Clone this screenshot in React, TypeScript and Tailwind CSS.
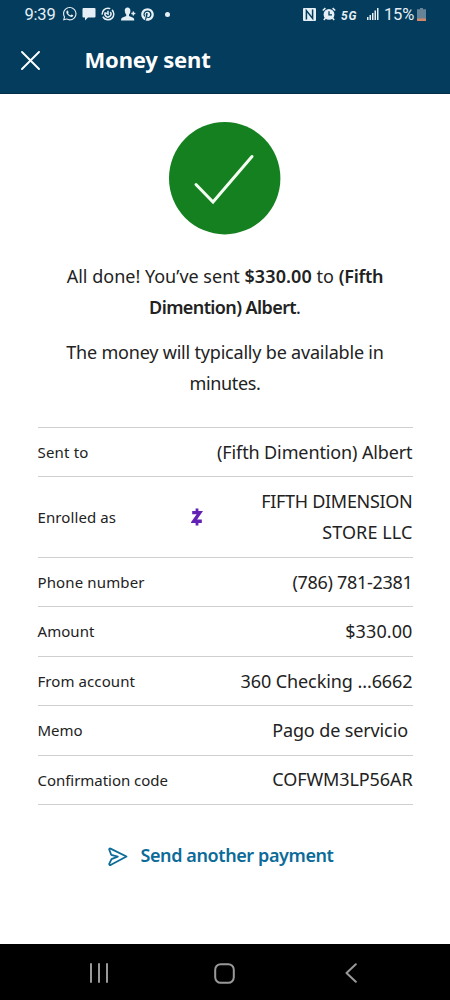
import React from "react";
import { FaWhatsapp, FaPinterest } from "react-icons/fa";

type Row = { label: string; value: string; tracking: string; labelTracking: string; tall?: boolean };

const rows: Row[] = [
  { label: "Sent to", value: "(Fifth Dimention) Albert", tracking: "tracking-[-0.12px]", labelTracking: "tracking-[0.18px]" },
  { label: "Enrolled as", value: "FIFTH DIMENSION STORE LLC", tracking: "tracking-[-0.3px]", labelTracking: "tracking-[0.1px]", tall: true },
  { label: "Phone number", value: "(786) 781-2381", tracking: "tracking-[-0.3px]", labelTracking: "tracking-[0.13px]" },
  { label: "Amount", value: "$330.00", tracking: "tracking-[0.1px]", labelTracking: "tracking-[0.06px]" },
  { label: "From account", value: "360 Checking ...6662", tracking: "tracking-[-0.08px]", labelTracking: "tracking-[0.08px]" },
  { label: "Memo", value: "Pago de servicio\u00a0", tracking: "tracking-[-0.12px]", labelTracking: "tracking-[-0.04px]" },
  { label: "Confirmation code", value: "COFWM3LP56AR", tracking: "tracking-[-0.1px]", labelTracking: "tracking-[-0.04px]" },
];

function ZelleMark() {
  return (
    <svg width="12" height="18" viewBox="0 0 12 18" fill="none" stroke="#6320b4" className="absolute left-[153px] top-[31px]">
      <path d="M1.2 4.6H8.8L2.8 13.2H10.8" strokeWidth="3.4" />
      <path d="M6 0.5V4M6 14V17.5" strokeWidth="2.8" />
    </svg>
  );
}

function StatusBar() {
  return (
    <div className="flex h-[28px] items-center pl-[24.5px] pr-[24px] font-['Roboto',sans-serif] text-[16.5px] leading-[28px] text-[#e6eff5]">
      <span className="w-[37.5px] pt-px tracking-[-0.2px]">9:39</span>
      <FaWhatsapp size={15.5} className="shrink-0" />
      <svg width="14" height="14" viewBox="0 0 14 14" className="ml-[4.5px]" fill="currentColor">
        <path d="M1.5 1H12.5Q13.5 1 13.5 2V9.5Q13.5 10.5 12.5 10.5H6L3 13.5V10.5H1.5Q.5 10.5 .5 9.5V2Q.5 1 1.5 1Z" />
      </svg>
      <svg width="14" height="14" viewBox="0 0 14 14" className="ml-[5px]" fill="none" stroke="currentColor" strokeWidth="1.5">
        <circle cx="7" cy="7" r="5.8" strokeDasharray="15 2 12 2" />
        <path d="M4.5 5.3A3 3 0 1 0 9.2 5M7 3.8V7L5.2 5.8" />
      </svg>
      <svg width="15" height="14" viewBox="0 0 15 14" className="ml-[5.5px]" fill="currentColor">
        <path d="M6.5.5C4.6.5 3.6 2 3.8 4 4 5.9 4.6 6.9 5.2 7.5V9L1 10.8Q0 11.3 0 13.5H13.3Q13.3 11.3 12.2 10.8L8 9V7.5C8.7 6.8 9.3 5.8 9.4 4 9.5 1.8 8.4.5 6.5.5Z" />
        <path d="M12.3 4.5V8.5M10.3 6.5H14.3" stroke="currentColor" strokeWidth="1.4" />
      </svg>
      <FaPinterest size={13} className="ml-[5px]" />
      <span className="ml-[11px] size-[5px] rounded-full bg-current" />
      <span className="flex-1" />
      <svg width="13" height="13" viewBox="0 0 13 13">
        <rect width="13" height="13" rx="1" fill="currentColor" />
        <path d="M3.4 11.4V2.6L9.6 10.4V1.6" fill="none" stroke="#033c5c" strokeWidth="1.5" />
      </svg>
      <svg width="14" height="14" viewBox="0 0 14 14" className="ml-[6px]">
        <circle cx="7" cy="7.4" r="5.4" fill="currentColor" />
        <path d="M.8 3.5L3.4 1.1M13.2 3.5L10.6 1.1M3.5 11L1.8 13M10.5 11L12.2 13" stroke="currentColor" strokeWidth="1.6" />
        <path d="M7 4.2V7.8H10" fill="none" stroke="#033c5c" strokeWidth="1.3" />
      </svg>
      <span className="ml-[5px] w-[18px] pt-[3px] text-[12px] font-bold italic tracking-[0.8px]">5G</span>
      <svg width="12" height="12" viewBox="0 0 12 12" className="ml-[8px]" fill="currentColor">
        <rect x="0" y="9" width="1.5" height="3" />
        <rect x="2.5" y="7" width="1.5" height="5" />
        <rect x="5" y="5" width="1.5" height="7" />
        <rect x="7.5" y="2.5" width="1.5" height="9.5" />
        <rect x="10" y="0" width="1.5" height="12" />
      </svg>
      <span className="ml-[5px] w-[33px] whitespace-nowrap pt-px tracking-[-0.2px]">15%</span>
      <svg width="9" height="13" viewBox="0 0 9 13">
        <path d="M3 0H6V1.3H9V13H0V1.3H3Z" fill="#668398" />
        <path d="M0 10.5H9V13H0Z" fill="#d48767" />
      </svg>
    </div>
  );
}

export default function App() {
  return (
    <div className="flex h-[1000px] w-[450px] flex-col overflow-hidden bg-white font-['Noto_Sans',sans-serif] text-[#222]">
      <header className="h-[94px] shrink-0 border-b border-[#02304b] bg-[#033c5c]">
        <StatusBar />
        <div className="flex h-[65px] items-center pl-[21px] text-white">
          <svg width="19" height="19" viewBox="0 0 19 19" fill="none" stroke="currentColor" strokeWidth="1.9" strokeLinecap="round">
            <path d="M1 1L18 18M18 1L1 18" />
          </svg>
          <h1 className="ml-[44.5px] pb-[4px] text-[22px] font-bold leading-[30px] tracking-[-0.18px]">Money sent</h1>
        </div>
      </header>

      <main className="flex flex-1 flex-col items-center">
        <svg width="112" height="113" viewBox="0 0 112 113" className="mt-[28px] shrink-0">
          <ellipse cx="55.7" cy="56.2" rx="55.7" ry="56.2" fill="#158020" />
          <path d="M27 62.5L44 80L83 34.5" fill="none" stroke="#f4fff2" strokeWidth="3" strokeLinecap="round" />
        </svg>

        <div className="mt-[26px] text-center text-[18px] leading-[31px]">
          <p className="whitespace-nowrap">
            All done! You’ve sent <span className="font-semibold tracking-[0.1px]">$330.00</span> to{" "}
            <span className="font-semibold tracking-[-0.25px]">(Fifth</span>
            <br />
            <span className="font-semibold tracking-[-0.6px]">Dimention) Albert</span>.
          </p>
          <p className="mt-[14px] whitespace-nowrap tracking-[-0.2px]">
            The money will typically be available in
            <br />
            <span className="tracking-[-0.35px]">minutes.</span>
          </p>
        </div>

        <dl className="mt-[28px] w-[375px] border-b border-[#cfcfcf]">
          {rows.map((row) => (
            <div
              key={row.label}
              className={`relative flex items-center justify-between border-t border-[#cfcfcf] ${row.tall ? "h-[80.7px]" : "h-[49.4px]"}`}
            >
              <dt className={`text-[15px] ${row.labelTracking}`}>{row.label}</dt>
              {row.tall && <ZelleMark />}
              <dd className={`text-right text-[18px] leading-[31px] ${row.tracking} ${row.tall ? "w-[180px]" : "whitespace-nowrap"}`}>
                {row.tall ? (
                  <>
                    FIFTH DIMENSION <span className="tracking-[0.1px]">STORE LLC</span>
                  </>
                ) : (
                  row.value
                )}
              </dd>
            </div>
          ))}
        </dl>

        <a className="mr-[8px] mt-[36px] flex items-center text-[#0c6b98]">
          <svg width="20" height="20" viewBox="0 0 20 20" fill="none" stroke="currentColor" strokeWidth="1.8" strokeLinejoin="round" strokeLinecap="round" className="mt-[3px]">
            <path d="M1.2 2.5Q1 1.2 2.5 1.6L18.5 9.5L3 17.8Q1.2 18.5 1.2 16.8L3.5 12.2L9.8 9.7L3.2 7.8Z" />
          </svg>
          <span className="ml-[12px] text-[18px] font-semibold leading-[28px] tracking-[-0.4px]">Send another payment</span>
        </a>
      </main>

      <nav className="flex h-[56px] shrink-0 items-center bg-black pl-[89px] pt-[2px] text-[#999]">
        <svg width="20" height="20" viewBox="0 0 20 20" stroke="currentColor" strokeWidth="2" strokeLinecap="round">
          <path d="M2 1V19M10 1V19M18 1V19" />
        </svg>
        <svg width="21" height="21" viewBox="0 0 21 21" fill="none" stroke="currentColor" strokeWidth="2" className="ml-[105px]">
          <rect x="1.2" y="1.2" width="18.6" height="18.6" rx="5.5" />
        </svg>
        <svg width="12" height="20" viewBox="0 0 12 20" fill="none" stroke="currentColor" strokeWidth="2" strokeLinecap="round" strokeLinejoin="round" className="ml-[110px]">
          <path d="M10.8 1.2L1.5 10L10.8 18.8" />
        </svg>
      </nav>
    </div>
  );
}
